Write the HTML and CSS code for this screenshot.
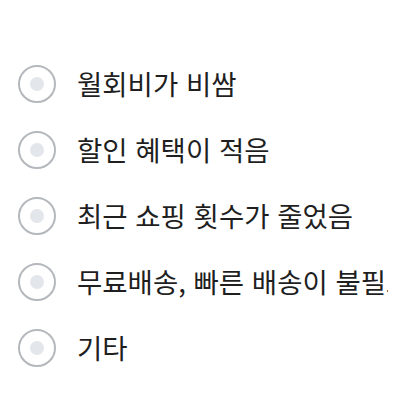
FILE: index.html
```html
<!DOCTYPE html>
<html lang="ko">
<head>
<meta charset="utf-8">
<link rel="stylesheet" href="styles.css">
</head>
<body>
<div class="card">
  <ul class="options">
    <li class="option"><span class="radio"><span class="dot"></span></span><span class="label">월회비가 비쌈</span></li>
    <li class="option"><span class="radio"><span class="dot"></span></span><span class="label">할인 혜택이 적음</span></li>
    <li class="option"><span class="radio"><span class="dot"></span></span><span class="label">최근 쇼핑 횟수가 줄었음</span></li>
    <li class="option"><span class="radio"><span class="dot"></span></span><span class="label">무료배송, 빠른 배송이 불필요함</span></li>
    <li class="option"><span class="radio"><span class="dot"></span></span><span class="label">기타</span></li>
  </ul>
</div>
</body>
</html>
```
FILE: styles.css
```css
html, body {
  margin: 0;
  padding: 0;
  background: #ffffff;
}
body {
  width: 400px;
  height: 400px;
  overflow: hidden;
  font-family: "Noto Sans CJK KR", "Noto Sans", sans-serif;
}
.card {
  margin: 5px;
  width: 383px;
  height: 380px;
  box-sizing: border-box;
  border-radius: 16px;
  overflow: hidden;
  background: #ffffff;
  padding-top: 46px;
}
.options {
  list-style: none;
  margin: 0;
  padding: 0 0 0 13px;
  display: flex;
  flex-direction: column;
}
.option {
  height: 66px;
  display: flex;
  align-items: center;
  gap: 21px;
  white-space: nowrap;
}
.radio {
  flex: none;
  width: 38px;
  height: 38px;
  box-sizing: border-box;
  border: 2px solid #b4b8bd;
  border-radius: 50%;
  display: flex;
  align-items: center;
  justify-content: center;
}
.dot {
  width: 14px;
  height: 14px;
  border-radius: 50%;
  background: #e3e6ea;
}
.label {
  font-size: 27.5px;
  color: #1f1f1f;
  line-height: 1;
}
```
